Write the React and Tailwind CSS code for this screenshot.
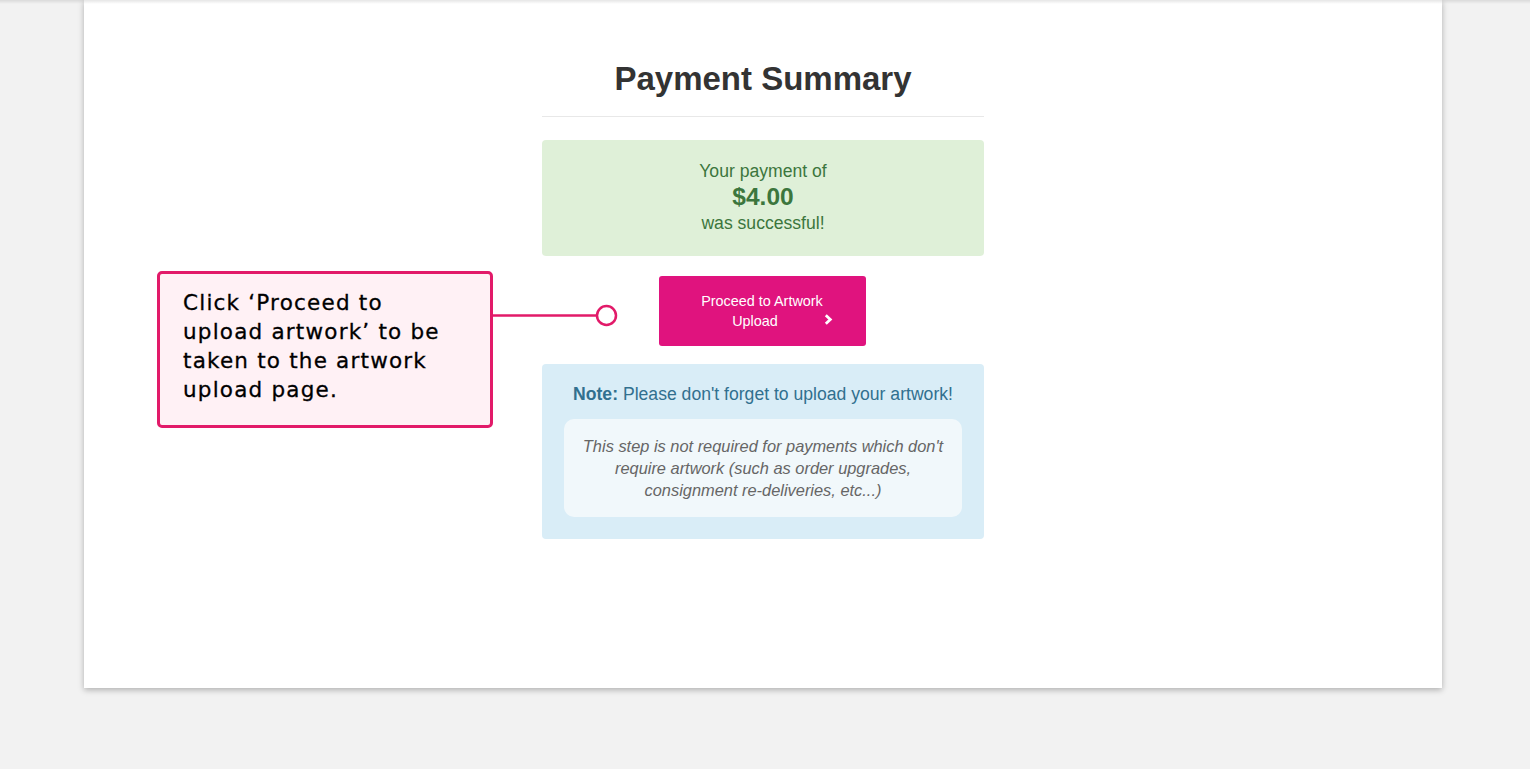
export default function App() {
  return (
    <div className="relative min-h-[769px] bg-[#f2f2f2] font-['Liberation_Sans',Arial,sans-serif]">
      {/* top shade */}
      <div className="absolute top-0 left-0 right-0 h-[4px] bg-gradient-to-b from-black/10 to-transparent z-10" />

      {/* ─── PAGE CARD ─── */}
      <div className="ml-[84px] w-[1358px] h-[688px] bg-white shadow-[0_2px_6px_rgba(0,0,0,0.28)]">
        <div className="mx-auto w-[442px] pt-[61px]">
          <h1 className="text-center text-[33px] leading-[36px] font-bold text-[#333]">
            Payment Summary
          </h1>
          <div className="mt-[19px] h-px bg-[#e8e8e8]" />

          {/* success */}
          <div className="mt-[23px] rounded-[4px] bg-[#dff0d8] pt-[18px] pb-[20px] text-center text-[#3c763d]">
            <p className="text-[17.6px] leading-[26px]">Your payment of</p>
            <p className="text-[24.5px] leading-[26px] font-bold">$4.00</p>
            <p className="text-[17.6px] leading-[26px]">was successful!</p>
          </div>

          {/* button */}
          <div className="mt-[20px] flex justify-center pr-[2px]">
            <button className="relative w-[207px] h-[70px] rounded-[3px] bg-[#e0137e] text-white text-[14.4px] leading-[20px] flex flex-col items-center justify-center">
              <span>Proceed to Artwork</span>
              <span className="pr-[14px]">Upload</span>
              <svg className="absolute left-[165px] top-[38px]" width="9" height="11" viewBox="0 0 9 11">
                <polyline points="1.8,1.3 6.3,5.5 1.8,9.7" fill="none" stroke="white" strokeWidth="2.8" />
              </svg>
            </button>
          </div>

          {/* note */}
          <div className="mt-[18px] rounded-[4px] bg-[#d9edf7] px-[22px] pt-[17px] pb-[22px] text-[#31708f]">
            <p className="text-center text-[17.6px] leading-[26px] whitespace-nowrap">
              <span className="font-bold">Note:</span> Please don't forget to upload your artwork!
            </p>
            <div className="mt-[12px] rounded-[10px] bg-[#f1f8fb] px-[14px] py-[16px] text-center text-[16.4px] leading-[22px] italic text-[#666]">
              This step is not required for payments which don't require artwork (such as order upgrades, consignment re-deliveries, etc...)
            </div>
          </div>
        </div>
      </div>

      {/* ─── CALLOUT ─── */}
      <div className="absolute left-[157px] top-[271px] w-[336px] h-[157px] rounded-[5px] border-[3px] border-[#e21a69] bg-[#fff1f5] pl-[23px] pt-[14px] font-['DejaVu_Sans',sans-serif] text-[21.5px] leading-[29px] tracking-[1.2px] text-black [-webkit-text-stroke:0.3px_black]">
        Click ‘Proceed to
        <br />
        upload artwork’ to be
        <br />
        taken to the artwork
        <br />
        upload page.
      </div>
      <svg className="absolute left-[490px] top-[303px]" width="130" height="24" viewBox="0 0 130 24">
        <line x1="0" y1="12.5" x2="107" y2="12.5" stroke="#e21a69" strokeWidth="2.5" />
        <circle cx="116.5" cy="12.5" r="9.5" fill="white" stroke="#e21a69" strokeWidth="2.5" />
      </svg>
    </div>
  );
}
